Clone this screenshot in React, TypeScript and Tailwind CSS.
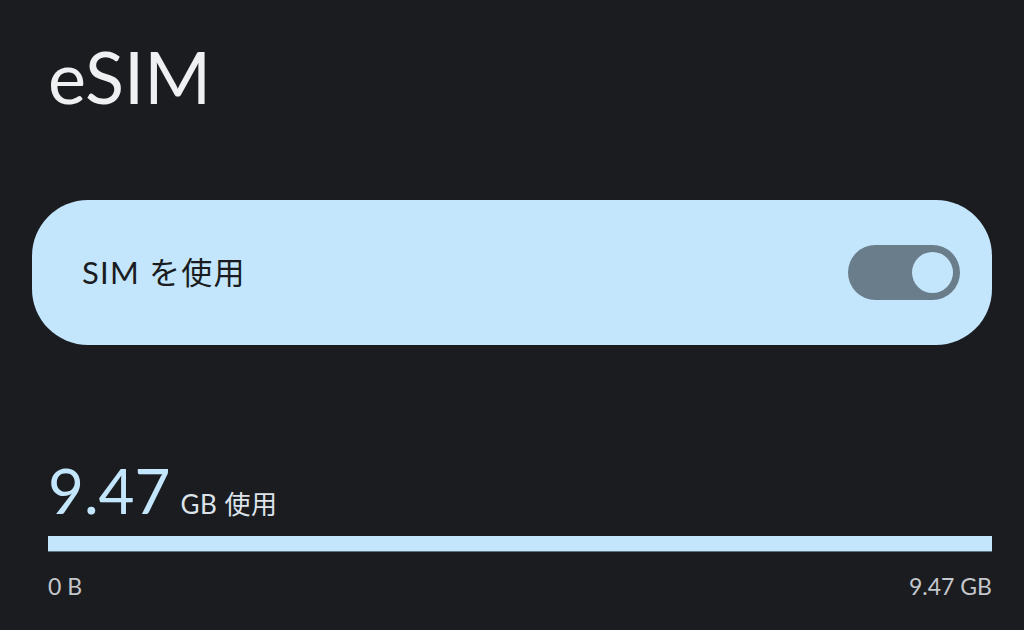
export default function App() {
  return (
    <div
      className="w-[1024px] h-[630px] overflow-hidden bg-[#1a1c20] pl-[48px] pr-[32px]"
      style={{ fontFamily: '"Lato", "Noto Sans CJK JP", sans-serif' }}
    >
      <h1 className="pt-[36px] text-[72px] leading-[80px] text-[#eef0f2] font-normal">eSIM</h1>

      {/* Use SIM card */}
      <div className="mt-[84px] -ml-[16px] h-[145px] rounded-[56px] bg-[#c3e6fd] flex items-center justify-between pl-[50px] pr-[32px]">
        <span className="text-[31px] tracking-[1.2px] text-[#1a1c20]">SIM を使用</span>
        <div className="w-[112px] h-[55px] rounded-full bg-[#6a7d8a] flex items-center justify-end pr-[7px]">
          <div className="w-[41px] h-[41px] rounded-full bg-[#c3e6fd]" />
        </div>
      </div>

      {/* Usage */}
      <div className="mt-[110px] flex items-baseline gap-[10px]">
        <span className="text-[62px] leading-[70px] text-[#c3e6fd]">9.47</span>
        <span className="text-[26px] tracking-[0.5px] text-[#dde3ea]">GB 使用</span>
      </div>
      <div className="mt-[11px] h-[16px] bg-[#c3e6fd] border-b border-[#5d7282]" />
      <div className="mt-[17px] flex justify-between text-[23px] text-[#c4c7cb]">
        <span>0 B</span>
        <span>9.47 GB</span>
      </div>
    </div>
  );
}
